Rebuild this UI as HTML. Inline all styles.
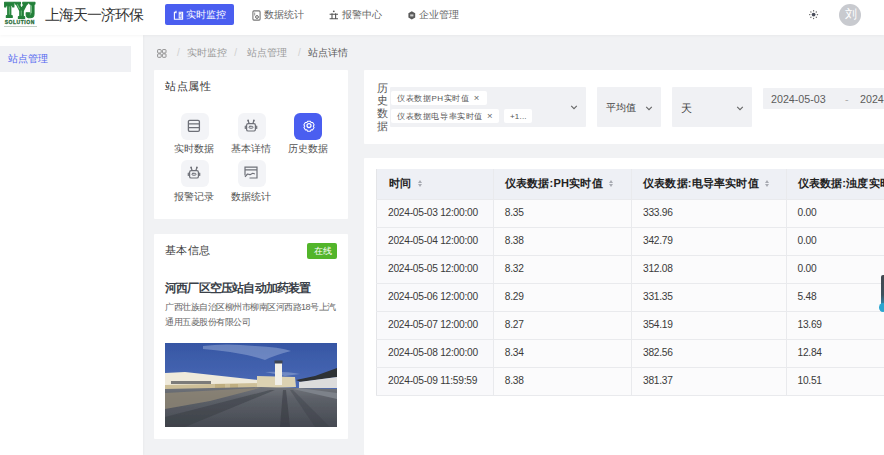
<!DOCTYPE html>
<html><head><meta charset="utf-8">
<style>
*{margin:0;padding:0;box-sizing:border-box}
html,body{width:884px;height:455px;overflow:hidden;background:#f1f2f4;font-family:"Liberation Sans",sans-serif;color:#333}
.abs{position:absolute}
#hdr{position:absolute;left:0;top:0;width:884px;height:35px;background:#fff;box-shadow:0 1px 3px rgba(0,0,0,.04);z-index:2}
#side{position:absolute;left:0;top:35px;width:142.5px;height:420px;background:#fff;box-shadow:1px 0 2px rgba(0,0,0,.03)}
.card{position:absolute;background:#fff;border-radius:1px}
.t{position:absolute;white-space:nowrap;line-height:1}
.ib{position:absolute;width:27.5px;height:27.5px;border-radius:6px;background:#f3f4f7}
.lbl{position:absolute;font-size:10px;line-height:1;white-space:nowrap;color:#555;margin-top:1px}
.sel{position:absolute;background:#f0f1f4;border-radius:1px}
.tag{position:absolute;background:#fff;border-radius:2px;height:14.5px}
.tag span{position:absolute;top:4.3px;font-size:8px;letter-spacing:0.6px;line-height:1;white-space:nowrap;color:#555}
.chev{position:absolute}
table{position:absolute;left:376px;top:169px;border-collapse:collapse;table-layout:fixed;width:600px;font-size:9.8px;color:#3a3a3a;border-left:1px solid #e4e5e8}
td,th{height:28px;padding:0 0 0 11px;text-align:left;border-bottom:1px solid #e9eaed;border-right:1px solid #e9eaed;white-space:nowrap;background:#fbfbfc}
th{height:30px;background:#eef0f5;font-weight:bold;font-size:11px;color:#222}
td{padding-bottom:2px;font-size:10.2px;letter-spacing:-0.25px}
td.c1{background:#f9f9fb}
tr>*:nth-child(2){padding-left:10.8px}
tr>*:nth-child(3){padding-left:11px}
tr>*:nth-child(4){padding-left:10.5px}
th{letter-spacing:0.2px}
th:first-child{padding-left:12px}
.so{display:inline-block;width:5px;height:7px;margin-left:6px;vertical-align:0px;position:relative}
.so:before{content:'';position:absolute;left:0.5px;top:0;border-left:2px solid transparent;border-right:2px solid transparent;border-bottom:3px solid #a8abb2}
.so:after{content:'';position:absolute;left:0.5px;top:3.6px;border-left:2px solid transparent;border-right:2px solid transparent;border-top:3px solid #a8abb2}
</style></head><body>
<div id="hdr">
  <svg class="abs" style="left:4px;top:1px" width="34" height="27" viewBox="0 0 34 27">
    <g transform="matrix(0.935 0 0 1.033 -0.335 -1.8)">
    <g fill="#23803a" stroke="#23803a" stroke-width="1.1" stroke-linejoin="round">
    <path d="M1 3h10v4.5h-1.3l-0.6-1.6h-1.4v9.6l1.5 0.6v1.6h-6.4v-1.6l1.5-0.6v-9.6h-1.4l-0.6 1.6h-1.3z"/>
    <path d="M11.5 3h6.5v1.6l-1 .5 2.2 4 2.2-4-1-.5v-1.6h5.2v1.6l-1 .5-3.6 6.2v5.2l1.5.6v1.6h-6.8v-1.6l1.5-.6v-5.2l-3.6-6.2-1.1-.5z"/>
    <path d="M26 3h7.5v1.6l-1 .5v9.2c0 2.6-1.6 3.7-4.2 3.7s-4.3-1-4.3-3.2v-1.6h3.8v1.6c0 .6.3 1 .7 1s.7-.5.7-1v-9.7l-1.2-.5z"/>
    </g>
    <g stroke="#8fd39a" stroke-width="1" opacity=".75" fill="none">
    <path d="M6 7v8"/><path d="M18.8 11v5"/><path d="M14.5 5l2.5 4.5"/><path d="M29.8 6v7.5"/>
    </g>
    </g>
    <text x="15.8" y="23" text-anchor="middle" font-family="Liberation Sans" font-weight="bold" font-size="5" fill="#2a6e3a" stroke="#2a6e3a" stroke-width="0.3" letter-spacing="0.55">SOLUTION</text>
    <rect x="-1" y="25" width="34" height="0.9" fill="#b9c9bd"/>
  </svg>
  <div class="t" style="left:44.5px;top:7px;font-size:15px;letter-spacing:-0.9px;color:#333">上海天一济环保</div>
  <div class="abs" style="left:165px;top:4px;width:69px;height:21px;background:#4a5ef0;border-radius:2px"></div>
  <svg class="abs" style="left:173px;top:10px" width="11" height="10" viewBox="0 0 11 10"><path d="M3 2.2H1.4V9.3H9.6V2.2H5.6M3 0.8V3.2" fill="none" stroke="#fff" stroke-width="1.1"/><rect x="6.2" y="3.6" width="1.9" height="4.4" fill="none" stroke="#fff" stroke-width="1"/></svg>
  <div class="t" style="left:186px;top:10.3px;font-size:10px;color:#fff">实时监控</div>
  <svg class="abs" style="left:251.5px;top:9.5px" width="9" height="11" viewBox="0 0 9 11"><rect x="0.9" y="0.9" width="7.2" height="9.2" rx="1" fill="none" stroke="#777" stroke-width="1.1"/><path d="M2.7 2.5v3" stroke="#888" stroke-width="0.9"/><circle cx="5" cy="7" r="1.4" fill="none" stroke="#666" stroke-width="1"/></svg>
  <div class="t" style="left:264px;top:10.3px;font-size:10px;color:#666">数据统计</div>
  <svg class="abs" style="left:328.5px;top:10px" width="10" height="10" viewBox="0 0 10 10"><circle cx="4.8" cy="1.3" r="0.9" fill="#555"/><path d="M0.6 4.3H9M0.6 8.8H9M3 3.3V8.8M6.6 3.3V8.8" fill="none" stroke="#555" stroke-width="1.1"/></svg>
  <div class="t" style="left:342px;top:10.3px;font-size:10px;color:#666">报警中心</div>
  <svg class="abs" style="left:407.5px;top:10.5px" width="8" height="9" viewBox="0 0 8 9"><path d="M3.8 0.3L7.2 2.2V6.6L3.8 8.6L0.4 6.6V2.2Z" fill="#5a5a5a"/><rect x="2.2" y="3.4" width="3.2" height="2" fill="#ccc"/></svg>
  <div class="t" style="left:419px;top:10.3px;font-size:10px;color:#666">企业管理</div>
  <svg class="abs" style="left:807px;top:8px" width="13" height="13" viewBox="0 0 13 13"><circle cx="6.6" cy="6.6" r="1.9" fill="#4a4d5a"/><g stroke="#666" stroke-width="1.2" stroke-linecap="round"><path d="M6.6 2.6v0.3M6.6 10.3v0.3M2.6 6.6h0.3M10.3 6.6h0.3M3.8 3.8l0.2 0.2M9.2 9.2l0.2 0.2M3.8 9.4l0.2-0.2M9.2 4l0.2-0.2"/></g></svg>
  <div class="abs" style="left:839px;top:4px;width:22px;height:22px;border-radius:50%;background:#c8cacf"></div>
  <div class="t" style="left:844.5px;top:9px;font-size:11.5px;color:#fff">刘</div>
</div>
<div id="side">
  <div class="abs" style="left:0;top:11px;width:131px;height:26px;background:#f0f1f4"></div>
  <div class="t" style="left:8px;top:18.8px;font-size:10px;color:#5468f0">站点管理</div>
</div>

<!-- breadcrumb -->
<svg class="abs" style="left:157px;top:48.5px" width="10" height="9" viewBox="0 0 10 9"><g fill="none" stroke="#8a8a8a" stroke-width="0.95"><rect x="0.6" y="0.6" width="3.6" height="3.4" rx="0.7"/><rect x="5.4" y="0.6" width="3.6" height="3.4" rx="0.7"/><rect x="0.6" y="4.9" width="3.6" height="3.4" rx="0.7"/><rect x="5.4" y="4.9" width="3.6" height="3.4" rx="0.7"/></g></svg>
<div class="t" style="left:177px;top:48px;font-size:10px;color:#d0d0d0">/</div>
<div class="t" style="left:187px;top:48px;font-size:10px;color:#9a9a9a">实时监控</div>
<div class="t" style="left:234.3px;top:48px;font-size:10px;color:#d0d0d0">/</div>
<div class="t" style="left:247px;top:48px;font-size:10px;color:#9a9a9a">站点管理</div>
<div class="t" style="left:298px;top:48px;font-size:10px;color:#d0d0d0">/</div>
<div class="t" style="left:308px;top:48px;font-size:10px;color:#5a5a5a">站点详情</div>

<!-- card 站点属性 -->
<div class="card" style="left:154px;top:70px;width:194px;height:149px"></div>
<div class="t" style="left:165px;top:80.5px;font-size:11px;letter-spacing:0.5px;color:#333">站点属性</div>
<div class="ib" style="left:181px;top:112.5px"></div>
<svg class="abs" style="left:187px;top:118.5px" width="14" height="14" viewBox="0 0 14 14"><g fill="none" stroke="#6e7078" stroke-width="1.3"><rect x="1.4" y="1.3" width="11" height="11" rx="1.3"/><path d="M1.4 4.9h11M1.4 8.6h11"/></g></svg>
<div class="lbl" style="left:174px;top:143px">实时数据</div>

<div class="ib" style="left:238px;top:112.5px"></div>
<svg class="abs" style="left:244px;top:118.5px" width="14" height="14" viewBox="0 0 14 14"><g fill="none" stroke="#6e7078" stroke-width="1.2" stroke-linecap="round"><path d="M4.2 1.8l0.8 2.4M9.8 1.8l-0.8 2.4"/><rect x="2.6" y="4.6" width="8.8" height="7.4" rx="1.6"/><rect x="5" y="7.3" width="4" height="1.9" rx="0.9" stroke-width="1"/><path d="M1.3 7.2v2.2M12.7 7.2v2.2"/></g><circle cx="4.1" cy="1.5" r="0.9" fill="#6e7078"/><circle cx="9.9" cy="1.5" r="0.9" fill="#6e7078"/></svg>
<div class="lbl" style="left:231px;top:143px">基本详情</div>

<div class="ib" style="left:294px;top:112.5px;background:#4a5ef0"></div>
<svg class="abs" style="left:301.5px;top:118.5px" width="14" height="14" viewBox="0 0 14 14"><g fill="none" stroke="#fff" stroke-width="1.25" stroke-linejoin="round"><path d="M5.3 1.6h3.4l0.9 1.6 1.9 0 1.7 2.9-1 1.6 1 1.6-1.7 2.9-1.9 0-0.9 1.6h-3.4l-0.9-1.6-1.9 0-1.7-2.9 1-1.6-1-1.6 1.7-2.9 1.9 0z" transform="translate(7 6.6) scale(0.82) translate(-7 -7)"/><circle cx="7" cy="6.6" r="2"/></g></svg>
<div class="lbl" style="left:288px;top:143px">历史数据</div>

<div class="ib" style="left:181px;top:159.5px"></div>
<svg class="abs" style="left:187px;top:165.5px" width="14" height="14" viewBox="0 0 14 14"><g fill="none" stroke="#6e7078" stroke-width="1.2" stroke-linecap="round"><path d="M4.2 1.8l0.8 2.4M9.8 1.8l-0.8 2.4"/><rect x="2.6" y="4.6" width="8.8" height="7.4" rx="1.6"/><rect x="5" y="7.3" width="4" height="1.9" rx="0.9" stroke-width="1"/><path d="M1.3 7.2v2.2M12.7 7.2v2.2"/></g><circle cx="4.1" cy="1.5" r="0.9" fill="#6e7078"/><circle cx="9.9" cy="1.5" r="0.9" fill="#6e7078"/></svg>
<div class="lbl" style="left:174px;top:191px">报警记录</div>

<div class="ib" style="left:238px;top:159.5px"></div>
<svg class="abs" style="left:244px;top:166px" width="14" height="14" viewBox="0 0 14 14"><g fill="none" stroke="#6e7078" stroke-width="1.2"><path d="M1 9.5V1.2h12v10.8H5.5"/><path d="M1 3.9h12M1 10.8l2.5-2.8 2.5 0.7 2.8-1.4 2.1 0.7" stroke-linejoin="round"/></g></svg>
<div class="lbl" style="left:231px;top:191px">数据统计</div>

<!-- card 基本信息 -->
<div class="card" style="left:154px;top:234px;width:194px;height:204.5px"></div>
<div class="t" style="left:165px;top:245px;font-size:11px;letter-spacing:0.4px;color:#3c3c3c">基本信息</div>
<div class="abs" style="left:307px;top:243px;width:30px;height:16px;background:#52b52a;border-radius:2px"></div>
<div class="t" style="left:314px;top:247px;font-size:8.5px;color:#fff">在线</div>
<div class="t" style="left:165px;top:281.8px;font-size:12px;letter-spacing:-0.8px;font-weight:bold;color:#3a3f48">河西厂区空压站自动加药装置</div>
<div class="t" style="left:165px;top:303px;font-size:9px;letter-spacing:-0.5px;color:#666">广西壮族自治区柳州市柳南区河西路18号上汽</div>
<div class="t" style="left:165px;top:317.5px;font-size:9px;letter-spacing:-0.5px;color:#666">通用五菱股份有限公司</div>
<svg class="abs" style="left:165px;top:342.5px" width="172" height="84" viewBox="0 0 172 84">
  <defs>
    <linearGradient id="sky" x1="0" y1="0" x2="0" y2="1"><stop offset="0" stop-color="#3656a4"/><stop offset="0.6" stop-color="#4e6db8"/><stop offset="1" stop-color="#8299cc"/></linearGradient>
    <linearGradient id="gnd" x1="0" y1="0" x2="0" y2="1"><stop offset="0" stop-color="#70737a"/><stop offset="0.3" stop-color="#5c6068"/><stop offset="1" stop-color="#464a52"/></linearGradient>
    <filter id="bl" x="0" y="0" width="1" height="1"><feGaussianBlur stdDeviation="0.45"/></filter>
  </defs>
  <g filter="url(#bl)">
  <rect width="172" height="84" fill="url(#sky)"/>
  <path d="M38 3 Q60 0 90 3 Q115 4 126 8 Q110 12 100 17 Q85 12 65 9 Q50 7 38 6Z" fill="#a7b8de" opacity=".45"/>
  <path d="M100 29 Q120 28 135 31 L120 33Z" fill="#9eb0d8" opacity=".5"/>
  <path d="M0 30 L20 29 L93 37 L95 44 L0 46Z" fill="#efeadb"/>
  <rect x="6" y="38" width="40" height="3" fill="#55565a" opacity=".75"/>
  <path d="M0 42 L95 40 L97 49 L0 51Z" fill="#cdbf98"/>
  <rect x="50" y="41" width="10" height="7" fill="#bfae80"/>
  <rect x="65" y="41" width="8" height="7" fill="#bfae80"/>
  <path d="M92 33 L130 34 L131 44 L92 46Z" fill="#dcd2b2"/>
  <rect x="110" y="19" width="7" height="23" fill="#f1efe8"/>
  <rect x="109.5" y="17.5" width="8" height="3" fill="#3d4453"/>
  <path d="M131 37 L150 33 L172 25 L172 34 L136 39Z" fill="#2d3036"/>
  <path d="M134 39 L172 34 L172 45 L134 45Z" fill="#dcdcdc"/>
  <path d="M0 46 L96 44 L172 46 L172 84 L0 84Z" fill="url(#gnd)"/>
  <path d="M134 45 L172 50 L172 56 L128 46Z" fill="#7d828a"/>
  <path d="M0 50 L95 45 L45 58 L0 66Z" fill="#8f8674" opacity=".8"/>
  <path d="M0 74 L105 47 L110 47 L20 84 L0 84Z" fill="#353941" opacity=".45"/>
  <path d="M115 84 L118 47 L121 47 L125 84Z" fill="#33363d" opacity=".5"/>
  <path d="M150 84 L125 47 L128 47 L165 84Z" fill="#3a3d44" opacity=".35"/>
  </g>
</svg>

<!-- form card -->
<div class="card" style="left:364px;top:70px;width:520px;height:74px"></div>
<div class="t" style="left:376px;top:81.5px;font-size:10.5px;line-height:12.7px;color:#555;width:12px;white-space:normal;text-align:center">历史数据</div>
<div class="sel" style="left:390px;top:87px;width:195.5px;height:39.5px"></div>
<div class="tag" style="left:391px;top:90.5px;width:96px"><span style="left:6px">仪表数据PH实时值</span><span style="left:82.7px;font-size:9.5px;letter-spacing:0;top:2.8px;color:#666">×</span></div>
<div class="tag" style="left:391px;top:108.5px;width:107.5px"><span style="left:6px">仪表数据电导率实时值</span><span style="left:95.9px;font-size:9.5px;letter-spacing:0;top:2.8px;color:#666">×</span></div>
<div class="tag" style="left:504px;top:108.5px;width:28px"><span style="left:6px;letter-spacing:0.2px">+1...</span></div>
<svg class="chev" style="left:570px;top:104px" width="8" height="6" viewBox="0 0 8 6"><path d="M1.2 1.8L4 4.6L6.8 1.8" fill="none" stroke="#666" stroke-width="1.1"/></svg>

<div class="sel" style="left:597px;top:87px;width:64px;height:39.5px"></div>
<div class="t" style="left:606px;top:103px;font-size:10px;color:#444">平均值</div>
<svg class="chev" style="left:645px;top:104.5px" width="8" height="6" viewBox="0 0 8 6"><path d="M1.2 1.8L4 4.6L6.8 1.8" fill="none" stroke="#666" stroke-width="1.1"/></svg>

<div class="sel" style="left:672px;top:87px;width:80px;height:39.5px"></div>
<div class="t" style="left:680.5px;top:102.5px;font-size:10.5px;color:#444">天</div>
<svg class="chev" style="left:735.5px;top:104.5px" width="8" height="6" viewBox="0 0 8 6"><path d="M1.2 1.8L4 4.6L6.8 1.8" fill="none" stroke="#666" stroke-width="1.1"/></svg>

<div class="sel" style="left:763px;top:87.5px;width:130px;height:21px"></div>
<div class="t" style="left:771px;top:93.8px;font-size:10.7px;color:#5c5c5c">2024-05-03</div>
<div class="t" style="left:845px;top:93.8px;font-size:10.7px;color:#aaa">-</div>
<div class="t" style="left:860px;top:93.8px;font-size:10.7px;color:#5c5c5c">2024-05-09</div>

<!-- table card -->
<div class="card" style="left:364px;top:158px;width:520px;height:297px"></div>
<table>
<tr><th style="width:117px">时间<i class="so"></i></th><th style="width:138px">仪表数据:PH实时值<i class="so"></i></th><th style="width:155px">仪表数据:电导率实时值<i class="so"></i></th><th style="width:190px">仪表数据:浊度实时值</th></tr>
<tr><td class="c1">2024-05-03 12:00:00</td><td>8.35</td><td>333.96</td><td>0.00</td></tr>
<tr><td class="c1">2024-05-04 12:00:00</td><td>8.38</td><td>342.79</td><td>0.00</td></tr>
<tr><td class="c1">2024-05-05 12:00:00</td><td>8.32</td><td>312.08</td><td>0.00</td></tr>
<tr><td class="c1">2024-05-06 12:00:00</td><td>8.29</td><td>331.35</td><td>5.48</td></tr>
<tr><td class="c1">2024-05-07 12:00:00</td><td>8.27</td><td>354.19</td><td>13.69</td></tr>
<tr><td class="c1">2024-05-08 12:00:00</td><td>8.34</td><td>382.56</td><td>12.84</td></tr>
<tr><td class="c1">2024-05-09 11:59:59</td><td>8.38</td><td>381.37</td><td>10.51</td></tr>
</table>
<div class="abs" style="left:880.5px;top:275px;width:6px;height:36px;border-radius:2px 0 0 3px;background:linear-gradient(#42484f,#3c525e 55%,#2f8db3 85%,#2aa6d0)"></div>
<div class="abs" style="left:879px;top:303px;width:8px;height:9px;border-radius:50%;background:#2aa6d0"></div>
</body></html>
